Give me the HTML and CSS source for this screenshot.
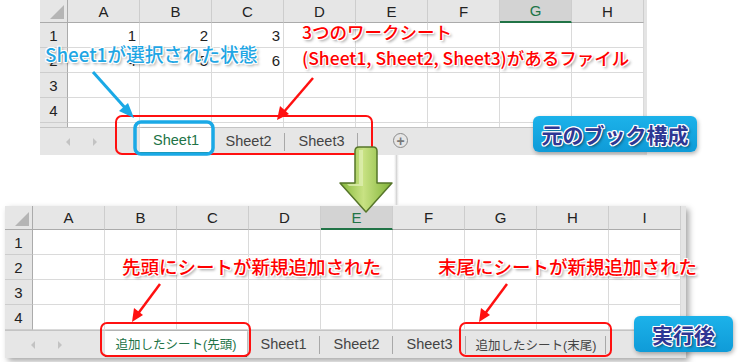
FILE: index.html
```html
<!DOCTYPE html>
<html lang="ja">
<head>
    <meta charset="UTF-8">
    <meta name="viewport" content="width=device-width, initial-scale=1.0">
    <title>シートの追加</title>
    <link rel="stylesheet" href="styles.css">
</head>
<body>
    <div class="canvas">
        <!-- Before: original workbook -->
        <section class="sheet sheet-top">
            <div class="grid" id="gridTop"></div>
            <div class="tabbar">
                <div class="nav"><span class="nav-prev"></span><span class="nav-next"></span></div>
                <div class="tab active">Sheet1</div>
                <div class="tab">Sheet2</div>
                <div class="tab">Sheet3</div>
                <div class="add">+</div>
            </div>
        </section>

        <!-- After: workbook with added sheets -->
        <section class="sheet sheet-bottom">
            <div class="grid" id="gridBottom"></div>
            <div class="tabbar">
                <div class="nav"><span class="nav-prev"></span><span class="nav-next"></span></div>
                <div class="tab active wide">追加したシート(先頭)</div>
                <div class="tab">Sheet1</div>
                <div class="tab">Sheet2</div>
                <div class="tab">Sheet3</div>
                <div class="tab wide">追加したシート(末尾)</div>
                <div class="add">+</div>
            </div>
        </section>

        <!-- Annotations -->
        <svg class="marks" width="751" height="362" viewBox="0 0 751 362">
            <defs>
                <linearGradient id="greenFill" x1="0" y1="0" x2="1" y2="0">
                    <stop offset="0" stop-color="#86b83a"/>
                    <stop offset="0.45" stop-color="#c8e283"/>
                    <stop offset="1" stop-color="#7fb236"/>
                </linearGradient>
                <linearGradient id="fadeLine" x1="0" y1="0" x2="1" y2="0">
                    <stop offset="0" stop-color="#ffffff" stop-opacity="0"/>
                    <stop offset="0.5" stop-color="#d6d6d6"/>
                    <stop offset="1" stop-color="#ffffff" stop-opacity="0"/>
                </linearGradient>
            </defs>

            <rect x="393" y="155" width="7" height="50" fill="url(#fadeLine)"/>

            <rect x="116" y="116" width="256" height="38" rx="6" fill="none" stroke="#ff1010" stroke-width="2"/>
            <rect x="135" y="122" width="78" height="32" rx="6" fill="none" stroke="#1aa9e6" stroke-width="3.5"/>

            <rect x="101" y="323" width="149" height="33" rx="6" fill="none" stroke="#ff1010" stroke-width="2"/>
            <rect x="460" y="323" width="151" height="33" rx="6" fill="none" stroke="#ff1010" stroke-width="2"/>

            <!-- blue arrow -->
            <line x1="93" y1="72" x2="127" y2="110" stroke="#1aa9e6" stroke-width="3"/>
            <polygon points="134,118 119,111 128,103" fill="#1aa9e6"/>

            <!-- red arrows -->
            <line x1="313" y1="78" x2="283" y2="113" stroke="#ff1010" stroke-width="2.5"/>
            <polygon points="277,120 280,106 289,114" fill="#ff1010"/>
            <line x1="160" y1="284" x2="137" y2="315" stroke="#ff1010" stroke-width="2.5"/>
            <polygon points="132,322 134,308 143,315" fill="#ff1010"/>
            <line x1="507" y1="284" x2="484" y2="315" stroke="#ff1010" stroke-width="2.5"/>
            <polygon points="479,322 481,308 490,315" fill="#ff1010"/>

            <!-- green down arrow -->
            <path d="M355,151 Q355,147 359,147 L373,147 Q377,147 377,151 L377,183 L392,183 L366,212 L340,183 L355,183 Z"
                  fill="url(#greenFill)" stroke="#56752a" stroke-width="1.5" stroke-linejoin="round"/>
            <path d="M359,150 L363,150 L363,186 L349,186 L347,184 L359,184 Z" fill="#e2f1b8" opacity="0.7"/>
        </svg>

        <div class="note note-red note-top">3つのワークシート<br>(Sheet1, Sheet2, Sheet3)があるファイル</div>
        <div class="note note-blue">Sheet1が選択された状態</div>
        <div class="note note-red note-big note-head">先頭にシートが新規追加された</div>
        <div class="note note-red note-big note-tail">末尾にシートが新規追加された</div>

        <div class="badge badge-before">元のブック構成</div>
        <div class="badge badge-after">実行後</div>
    </div>

    <script>
        function buildGrid(id, cols, rows, headHeight, activeCol, values, partialRow) {
            const grid = document.getElementById(id);
            grid.style.gridTemplateColumns = '28px repeat(' + cols.length + ', 72px)';
            grid.style.gridTemplateRows = headHeight + 'px repeat(' + rows + ', 25px)' + (partialRow ? ' 4px' : '');

            // column headers
            const corner = document.createElement('div');
            corner.className = 'corner';
            grid.appendChild(corner);
            cols.forEach(function (c) {
                const h = document.createElement('div');
                h.className = 'col-head' + (c === activeCol ? ' active' : '');
                h.textContent = c;
                grid.appendChild(h);
            });

            // body rows
            for (let r = 1; r <= rows; r++) {
                const rh = document.createElement('div');
                rh.className = 'row-head';
                rh.textContent = r;
                grid.appendChild(rh);
                cols.forEach(function (c, i) {
                    const cell = document.createElement('div');
                    cell.className = 'cell';
                    const row = values[r - 1];
                    if (row && row[i] !== undefined) cell.textContent = row[i];
                    grid.appendChild(cell);
                });
            }

            // sliver of the next row under the last full one
            if (partialRow) {
                const rh = document.createElement('div');
                rh.className = 'row-head partial';
                grid.appendChild(rh);
                cols.forEach(function () {
                    const cell = document.createElement('div');
                    cell.className = 'cell partial';
                    grid.appendChild(cell);
                });
            }
        }

        buildGrid('gridTop', ['A', 'B', 'C', 'D', 'E', 'F', 'G', 'H'], 4, 23, 'G', [[1, 2, 3], [4, 5, 6]], true);
        buildGrid('gridBottom', ['A', 'B', 'C', 'D', 'E', 'F', 'G', 'H', 'I'], 4, 24, 'E', [], false);
    </script>
</body>
</html>
```

FILE: styles.css
```css
* {
    margin: 0;
    padding: 0;
    box-sizing: border-box;
}

body {
    font-family: 'Liberation Sans', 'Noto Sans CJK JP', sans-serif;
    background: #ffffff;
    color: #222;
}

.canvas {
    position: relative;
    width: 751px;
    height: 362px;
    overflow: hidden;
}

/* ---------- spreadsheet ---------- */

.sheet {
    display: flex;
    flex-direction: column;
    background: #ffffff;
}

.sheet-top {
    width: 607px;
    margin-left: 40px;
    border-right: 3px solid #e4e4e4;
}

.sheet-bottom {
    width: 681px;
    margin-left: 5px;
    margin-top: 51px;
    border-right: 5px solid #e4e4e4;
    box-shadow: 3px 3px 6px rgba(0, 0, 0, 0.35);
}

.grid {
    display: grid;
}

.corner,
.col-head {
    background: #e6e6e6;
    border-bottom: 1px solid #ababab;
}

.corner {
    position: relative;
    border-right: 1px solid #ababab;
}

.corner::after {
    content: "";
    position: absolute;
    right: 3px;
    bottom: 3px;
    border-style: solid;
    border-width: 0 0 14px 14px;
    border-color: transparent transparent #b5b5b5 transparent;
}

.col-head {
    display: flex;
    align-items: center;
    justify-content: center;
    font-size: 15px;
    border-right: 1px solid #cdcdcd;
    color: #222;
}

.col-head.active {
    background: #d3d3d3;
    color: #217346;
    border-bottom: 2px solid #217346;
}

.row-head {
    display: flex;
    align-items: center;
    justify-content: center;
    font-size: 15px;
    background: #e6e6e6;
    border-right: 1px solid #ababab;
    border-bottom: 1px solid #cdcdcd;
}

.cell {
    display: flex;
    align-items: center;
    justify-content: flex-end;
    padding-right: 3px;
    font-size: 15px;
    border-right: 1px solid #dadada;
    border-bottom: 1px solid #dadada;
}

.partial {
    border-bottom: 0;
}

/* ---------- sheet tabs ---------- */

.tabbar {
    display: flex;
    height: 28px;
    background: #e6e6e6;
    border-top: 1px solid #c4c4c4;
}

.nav {
    display: flex;
    align-items: center;
    width: 100px;
    flex-shrink: 0;
    padding-left: 26px;
    gap: 23px;
}

.nav-prev,
.nav-next {
    width: 0;
    height: 0;
    border-style: solid;
    border-width: 4px;
}

.nav-prev {
    border-color: transparent #c3c3c3 transparent transparent;
    border-left-width: 0;
}

.nav-next {
    border-color: transparent transparent transparent #c3c3c3;
    border-right-width: 0;
}

.tab {
    position: relative;
    display: flex;
    align-items: center;
    justify-content: center;
    flex-shrink: 0;
    width: 73px;
    height: 26px;
    font-size: 14.5px;
    color: #444;
    white-space: nowrap;
}

.tab::after {
    content: "";
    position: absolute;
    right: 0;
    top: 5px;
    height: 18px;
    border-right: 1px solid #a8a8a8;
}

.tab.wide {
    width: 140px;
    font-size: 12.5px;
    padding-top: 1px;
}

.tab.active {
    width: 72px;
    background: #ffffff;
    color: #217346;
    border-bottom: 2px solid #217346;
    box-shadow: 1px 0 2px rgba(0, 0, 0, 0.25);
}

.tab.active.wide {
    width: 142px;
}

.tab.active::after {
    display: none;
}

.add {
    display: flex;
    align-items: center;
    justify-content: center;
    flex-shrink: 0;
    width: 15px;
    height: 15px;
    margin: 5px 0 0 35px;
    border: 1.5px solid #8a8a8a;
    border-radius: 50%;
    color: #7a7a7a;
    font-size: 14px;
    line-height: 1;
    font-weight: bold;
}

/* ---------- overlays ---------- */

.marks {
    position: absolute;
    left: 0;
    top: 0;
    pointer-events: none;
}

.note {
    position: absolute;
    font-family: 'Noto Sans CJK JP', sans-serif;
    font-weight: 500;
    white-space: nowrap;
    text-shadow:
        -1px -1px 0 #fff, 1px -1px 0 #fff, -1px 1px 0 #fff, 1px 1px 0 #fff,
        0 -1px 0 #fff, 0 1px 0 #fff, -1px 0 0 #fff, 1px 0 0 #fff,
        2px 2px 3px rgba(0, 0, 0, 0.45);
}

.note-red {
    color: #ff0000;
}

.note-top {
    left: 302px;
    top: 19px;
    font-size: 17.5px;
    line-height: 26px;
}

.note-blue {
    left: 45px;
    top: 41px;
    font-size: 18.8px;
    line-height: 26px;
    color: #1fa6e4;
}

.note-big {
    font-size: 18.5px;
    line-height: 26px;
    top: 253px;
}

.note-head {
    left: 122px;
}

.note-tail {
    left: 438px;
}

.badge {
    position: absolute;
    display: flex;
    align-items: center;
    justify-content: center;
    height: 36px;
    border-radius: 6px;
    background: linear-gradient(#1cb2ea, #0f9bd8);
    box-shadow: 1px 2px 4px rgba(0, 0, 0, 0.3);
    font-family: 'Noto Sans CJK JP', sans-serif;
    font-weight: bold;
    font-size: 21px;
    color: #2e3794;
    text-shadow:
        -1px -1px 0 #fff, 1px -1px 0 #fff, -1px 1px 0 #fff, 1px 1px 0 #fff,
        0 -1px 0 #fff, 0 1px 0 #fff, -1px 0 0 #fff, 1px 0 0 #fff,
        2px 2px 3px rgba(0, 0, 0, 0.5);
}

.badge-before {
    left: 533px;
    top: 116px;
    width: 164px;
}

.badge-after {
    left: 634px;
    top: 316px;
    width: 99px;
}
```
